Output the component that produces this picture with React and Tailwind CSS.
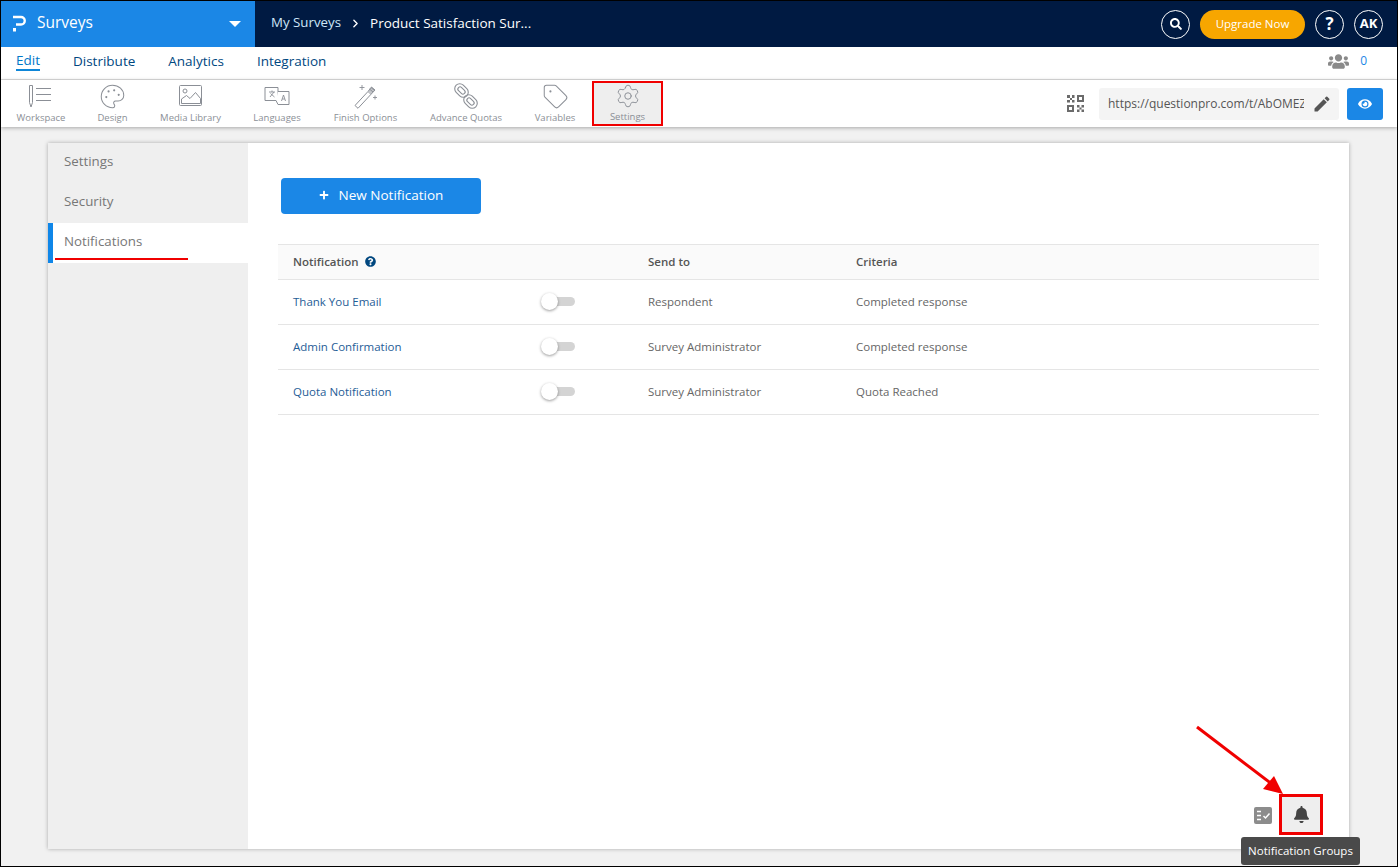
import React from "react";
import { FaSearch, FaUsers, FaEye, FaBell, FaQuestionCircle, FaPlus } from "react-icons/fa";
import { MdEdit } from "react-icons/md";
import { Palette, Tag, ChevronRight, Settings as Gear } from "lucide-react";

function WorkspaceIcon() {
  return (
    <svg width="26" height="26" viewBox="0 0 26 26" fill="none" stroke="currentColor" strokeWidth="1">
      <path d="M1.5 2.5h3v17l-1.5 4.5l-1.500-4.500z" />
      <path d="M8 5.500h15M8 11.500h15M8 17.500h15" />
    </svg>
  );
}

function ImageIcon() {
  return (
    <svg width="24" height="22" viewBox="0 0 24 22" fill="none" stroke="currentColor" strokeWidth="1">
      <rect x="0.500" y="0.500" width="22" height="20" rx="1" />
      <circle cx="6" cy="6" r="2" />
      <path d="M2.500 14l5-3.500l3.500 3l5.500-6l5 6v5h-19z" />
    </svg>
  );
}

function LanguagesIcon() {
  return (
    <svg width="26" height="24" viewBox="0 0 26 24" fill="none" stroke="currentColor" strokeWidth="1">
      <path d="M1 3.500h13v13h-13z" />
      <path d="M14 7.500h11v13h-11l-2-4" fill="white" />
      <path d="M5 8h6M8 6.500v1.500M6 13l4-5M6.500 9.500l4 3.500" strokeWidth="0.9" />
      <path d="M17.500 17l2-6l2 6M18.200 15h2.600" strokeWidth="0.9" />
    </svg>
  );
}

function WandIcon() {
  return (
    <svg width="24" height="26" viewBox="0 0 24 26" fill="none" stroke="currentColor" strokeWidth="1">
      <path d="M1 22.500l13-14l3 2.800l-13 14z" />
      <path d="M14 8.500l3.500-4.500l3.500 3l-4 4.300" fill="#c4c6ca" />
      <path d="M15.500 6l3.500 3M17 4.500l3.500 3" />
      <path d="M8 2v5M5.500 4.500h5M21 12.500v4M19 14.500h4" strokeWidth="0.9" />
    </svg>
  );
}

function ChainIcon() {
  return (
    <svg width="26" height="26" viewBox="0 0 26 26" fill="none" stroke="currentColor" strokeWidth="1.100">
      <rect x="1" y="2.500" width="15" height="10" rx="5" transform="rotate(45 8.500 7.500)" />
      <rect x="4.300" y="5.300" width="8.400" height="4.400" rx="2.200" transform="rotate(45 8.500 7.500)" />
      <rect x="10" y="13.500" width="15" height="10" rx="5" transform="rotate(45 17.500 18.500)" />
      <rect x="13.300" y="16.300" width="8.400" height="4.400" rx="2.200" transform="rotate(45 17.500 18.500)" />
    </svg>
  );
}

function QrIcon() {
  return (
    <svg width="17" height="17" viewBox="0 0 17 17" fill="#6b6b6b">
      <path d="M0 0h3v3h-3zM5 0h2.500v3h-2.500zM3 3h2v2h-2zM0 5h3v2.500h-3zM5 5h2.500v2.500h-2.500z" />
      <path fillRule="evenodd" d="M10 0h7v7h-7zM12 2v3h3v-3z" />
      <path fillRule="evenodd" d="M0 10h7v7h-7zM2 12v3h3v-3z" />
      <path d="M10 10h2.500v2.500h-2.500zM12.500 12.500h2v2h-2zM14.500 10h2.500v2.500h-2.500zM14.500 14.500h2.500v2.500h-2.500zM10 14.500h2.500v2.500h-2.500z" />
    </svg>
  );
}

function ChecklistIcon() {
  return (
    <svg width="18" height="17" viewBox="0 0 18 17" className="mt-[2px]">
      <rect width="18" height="17" rx="2" fill="#8c8c8c" />
      <path d="M3 4.500h4M3 8.500h4M3 12.500h4" stroke="white" strokeWidth="1.500" />
      <path d="M9.500 9l2 2l4-4.500" stroke="white" strokeWidth="1.500" fill="none" />
    </svg>
  );
}

const tools = [
  { label: "Workspace", w: "w-[80px]", icon: <WorkspaceIcon /> },
  { label: "Design", w: "w-[63px]", icon: <Palette size={27} strokeWidth={0.9} /> },
  { label: "Media Library", w: "w-[93px]", icon: <ImageIcon /> },
  { label: "Languages", w: "w-[80px]", icon: <LanguagesIcon /> },
  { label: "Finish Options", w: "w-[97px]", icon: <WandIcon /> },
  { label: "Advance Quotas", w: "w-[104px]", icon: <ChainIcon /> },
  { label: "Variables", w: "w-[74px]", icon: <Tag size={27} strokeWidth={0.9} /> },
];

const rows = [
  { name: "Thank You Email", to: "Respondent", criteria: "Completed response" },
  { name: "Admin Confirmation", to: "Survey Administrator", criteria: "Completed response" },
  { name: "Quota Notification", to: "Survey Administrator", criteria: "Quota Reached" },
];

function Toggle() {
  return (
    <div className="relative w-[34px] h-[17px] flex items-center justify-end">
      <div className="w-[29px] h-[9px] rounded-full bg-[#d4d4d4]" />
      <div className="absolute left-0 top-0 w-[17px] h-[17px] rounded-full bg-white shadow-[0_1px_3px_rgba(0,0,0,0.4)]" />
    </div>
  );
}

export default function App() {
  return (
    <div className="relative w-[1398px] h-[867px] overflow-hidden border border-black bg-[#f1f1f1] flex flex-col font-['Open_Sans',sans-serif] text-[13px]">
      {/* top bar */}
      <header className="h-[46px] shrink-0 flex items-center bg-[#001a42] text-white">
        <div className="w-[254px] h-full bg-[#1b87e6] flex items-center pl-[12px] pr-[14px]">
          <svg width="13" height="17" viewBox="0 0 13 17" fill="none" className="mb-[2px]">
            <path d="M0 2h8a3.500 3.500 0 0 1 0 7.500h-5" stroke="white" strokeWidth="2.400" />
            <rect x="0" y="13" width="3" height="3.500" fill="white" />
          </svg>
          <span className="ml-[11px] mb-[2px] text-[15.500px] font-medium">Surveys</span>
          <div className="ml-auto w-0 h-0 border-x-[6px] border-x-transparent border-t-[6px] border-t-white" />
        </div>
        <div className="ml-4 mb-[2px] flex items-center text-[13.300px] font-medium">
          <span className="text-[#cde6f7]">My Surveys</span>
          <ChevronRight size={13} strokeWidth={2.5} className="mx-[8px]" />
          <span className="text-[13.500px]">Product Satisfaction Sur...</span>
        </div>
        <div className="ml-auto flex items-center pr-[14px]">
          <div className="w-[29px] h-[29px] rounded-full border border-white flex items-center justify-center">
            <FaSearch size={12} />
          </div>
          <div className="ml-[10px] w-[105px] h-[29px] pb-[1px] rounded-full bg-[#f7a600] flex items-center justify-center font-medium text-[11.500px]">
            Upgrade Now
          </div>
          <div className="ml-[10px] w-[29px] h-[29px] rounded-full border border-white flex items-center justify-center font-bold text-[17px]">
            ?
          </div>
          <div className="ml-[10px] w-[29px] h-[29px] rounded-full border border-white flex items-center justify-center font-bold text-[13px]">
            AK
          </div>
        </div>
      </header>

      {/* tabs */}
      <nav className="h-[33px] shrink-0 bg-white border-b border-[#ddd] flex items-center pb-[4px] pl-[15px] pr-[15px] gap-[33px] text-[13.500px] text-[#00477f]">
        <span className="text-[#0077c8] border-b-2 border-[#0f86d8] leading-[17px]">Edit</span>
        <span>Distribute</span>
        <span>Analytics</span>
        <span>Integration</span>
        <div className="ml-auto flex items-center text-[#8a8a8a] pr-[14px]">
          <FaUsers size={21} />
          <span className="ml-[11px] mr-[1px] text-[12px] text-[#1b87e6]">0</span>
        </div>
      </nav>

      {/* toolbar */}
      <div className="h-[47px] shrink-0 bg-white flex items-center shadow-[0_1px_4px_rgba(0,0,0,0.3)] z-10 text-[#8b8f96]">
        {tools.map((t) => (
          <div key={t.label} className={`${t.w} h-full flex flex-col items-center justify-end pb-[2px]`}>
            <div className="h-[28px] mb-[1px] flex items-center justify-center">{t.icon}</div>
            <span className="text-[9.500px] leading-[14px] whitespace-nowrap">{t.label}</span>
          </div>
        ))}
        <div className="relative w-[71px] h-[45px] bg-[#eeeeee] flex flex-col items-center justify-end border-2 border-[#f00000]">
          <div className="h-[27px] mb-[1px] flex items-center justify-center">
            <Gear size={26} strokeWidth={0.9} />
          </div>
          <span className="text-[9.500px] leading-[14px]">Settings</span>
        </div>
        <div className="ml-auto flex items-center pr-[14px]">
          <QrIcon />
          <div className="ml-[15px] w-[240px] h-[32px] bg-[#f4f4f4] rounded-[3px] flex items-center pl-[9px] pr-[7px] text-[#555] text-[12px]">
            <span className="w-[196px] overflow-hidden whitespace-nowrap">https://questionpro.com/t/AbOMEZ8</span>
            <MdEdit size={20} className="ml-auto text-[#555]" />
          </div>
          <div className="ml-2 w-[36px] h-[32px] bg-[#1b87e6] rounded-[3px] flex items-center justify-center text-white">
            <FaEye size={14} />
          </div>
        </div>
      </div>

      {/* content */}
      <main className="flex-1 min-h-0 pt-[16px] pb-[17px] pl-[47px] pr-[48px]">
        <div className="h-full bg-white flex shadow-[0_0_4px_rgba(0,0,0,0.3)]">
          <aside className="w-[200px] shrink-0 bg-[#efefef] text-[13.300px] text-[#777]">
            <div className="h-[40px] flex items-center pb-[2px] pl-[16px]">Settings</div>
            <div className="h-[40px] flex items-center pb-[2px] pl-[16px]">Security</div>
            <div className="relative h-[40px] flex items-center pb-[2px] pl-[11px] bg-white border-l-[5px] border-[#0f86e8]">
              Notifications
              <div className="absolute left-[2px] top-[35px] w-[133px] h-[2px] bg-[#f00000]" />
            </div>
          </aside>

          <section className="flex-1 min-w-0 flex flex-col pl-[30px] pr-[30px]">
            <button className="ml-[3px] mt-[35px] w-[200px] h-[36px] shrink-0 pb-[2px] bg-[#1b87e6] rounded-[4px] text-white font-medium text-[13.500px] flex items-center justify-center gap-[10px]">
              <FaPlus size={10} />
              New Notification
            </button>

            <div className="mt-[30px] border-t border-[#e5e5e5] text-[11.500px]">
              <div className="h-[35px] grid grid-cols-[355px_208px_1fr] items-center pb-[1px] pl-[15px] bg-[#fafafa] border-b border-[#e5e5e5] font-semibold text-[#555]">
                <div className="flex items-center gap-[6px]">
                  Notification
                  <FaQuestionCircle size={11} className="text-[#00477f]" />
                </div>
                <div>Send to</div>
                <div>Criteria</div>
              </div>
              {rows.map((r) => (
                <div key={r.name} className="h-[45px] grid grid-cols-[355px_208px_1fr] items-center pb-[1px] pl-[15px] border-b border-[#e5e5e5] text-[#666]">
                  <div className="flex items-center">
                    <span className="w-[248px] text-[#1f5d96]">{r.name}</span>
                    <Toggle />
                  </div>
                  <div>{r.to}</div>
                  <div>{r.criteria}</div>
                </div>
              ))}
            </div>

            <div className="mt-auto mb-[14px] flex items-center justify-end -mr-[4px]">
              <ChecklistIcon />
              <div className="ml-[7px] w-[44px] h-[41px] bg-[#eeeeee] border-[3px] border-[#f00000] flex items-center justify-center text-[#444]">
                <FaBell size={17} />
              </div>
            </div>
          </section>
        </div>
      </main>

      {/* tooltip */}
      <div className="absolute left-[1240px] top-[836px] w-[119px] h-[28px] pb-[1px] rounded-[3px] bg-[#4a4a4a] text-white text-[11.500px] font-medium flex items-center justify-center whitespace-nowrap">
        Notification Groups
      </div>

      {/* red arrow annotation */}
      <svg className="absolute left-[1190px] top-[720px]" width="120" height="80" viewBox="0 0 120 80" fill="none">
        <path d="M6 6L82 64" stroke="#f00000" strokeWidth="3" />
        <path d="M92 73L72 68L83 55z" fill="#f00000" />
      </svg>
    </div>
  );
}
